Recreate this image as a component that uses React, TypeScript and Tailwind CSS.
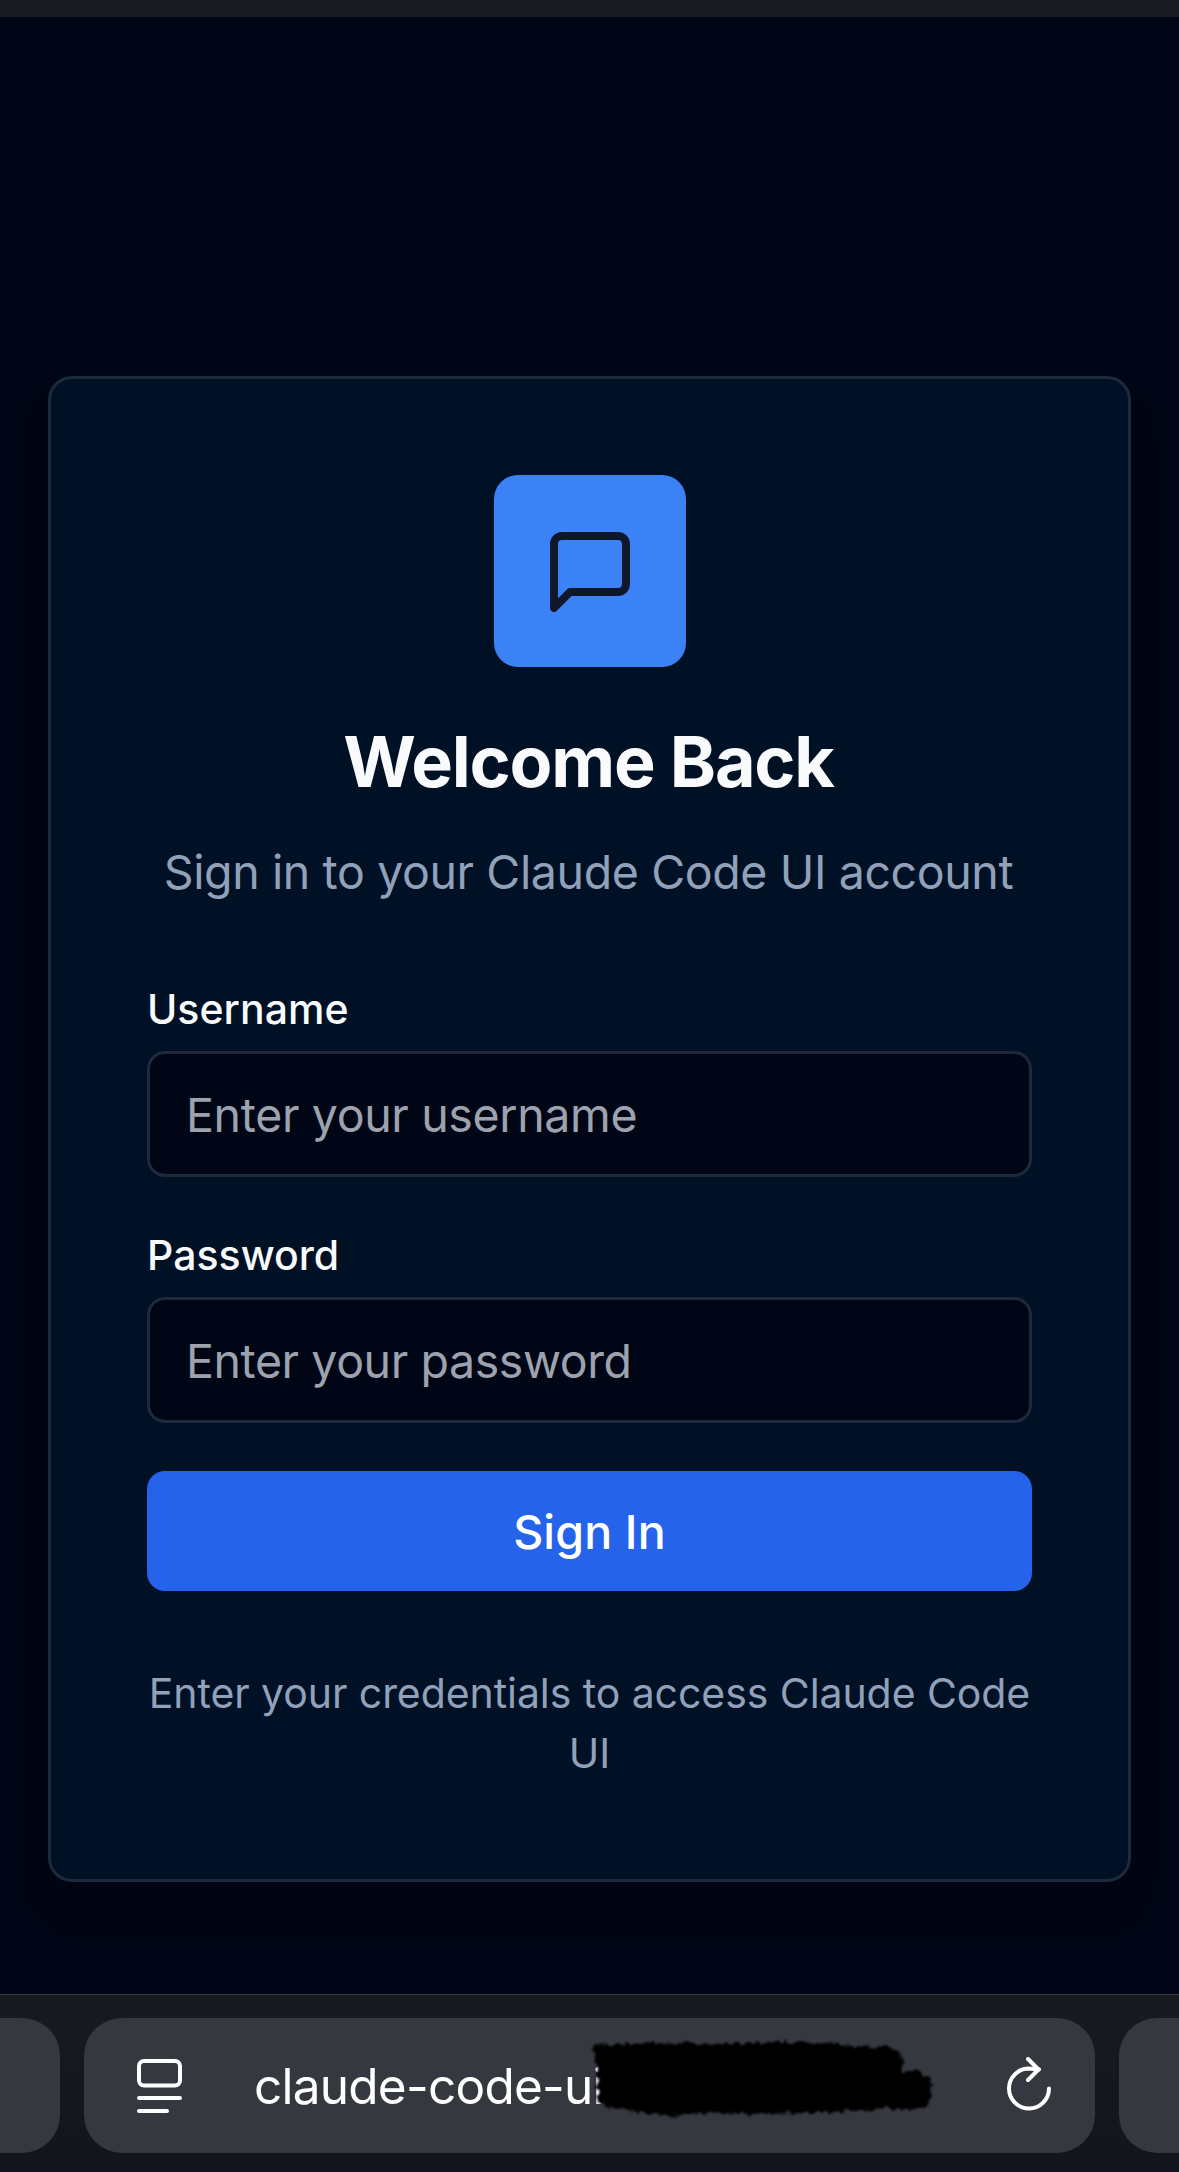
import { useState } from 'react';
import type { FormEvent } from 'react';

function MessageIcon() {
  return (
    <svg
      className="mt-0.5 ml-px size-24 text-slate-900"
      viewBox="0 0 24 24"
      fill="none"
      stroke="currentColor"
      strokeWidth="2"
      strokeLinecap="round"
      strokeLinejoin="round"
      aria-hidden="true"
    >
      <path d="M21 15a2 2 0 0 1-2 2H7l-4 4V5a2 2 0 0 1 2-2h14a2 2 0 0 1 2 2z" />
    </svg>
  );
}

type FieldProps = {
  id: string;
  label: string;
  type: string;
  placeholder: string;
  spacing: string;
};

function Field({ id, label, type, placeholder, spacing }: FieldProps) {
  const [value, setValue] = useState('');
  return (
    <div className="flex flex-col gap-3">
      <label htmlFor={id} className="text-[41px]/[60px] font-medium tracking-[0.02px] text-slate-50">
        {label}
      </label>
      <input
        id={id}
        type={type}
        value={value}
        onChange={(e) => setValue(e.target.value)}
        placeholder={placeholder}
        className={`h-[126px] w-full rounded-[18px] border-[3px] border-slate-800 bg-[#000615] px-9 pt-0.5 text-[46.5px] text-slate-50 outline-none placeholder:text-[#9ca3af] ${spacing}`}
      />
    </div>
  );
}

function LoginCard() {
  const submit = (e: FormEvent) => e.preventDefault();
  return (
    <section className="flex h-[1506px] w-[1083px] flex-col rounded-3xl border-[3px] border-slate-800 bg-[#001025] p-24 shadow-[0_30px_45px_-9px_rgba(0,0,0,0.1),0_12px_18px_-12px_rgba(0,0,0,0.1)]">
      <div className="flex flex-col items-center text-center">
        <div className="flex size-48 items-center justify-center rounded-3xl bg-[#3b82f6]">
          <MessageIcon />
        </div>
        <h1 className="mt-[47px] pr-0.5 text-[70px]/[96px] font-bold tracking-[-1.2px] text-slate-50">Welcome Back</h1>
        <p className="mt-[26px] pr-0.5 text-[46.5px]/[72px] whitespace-nowrap tracking-[-0.39px] text-slate-400">
          Sign in to your Claude Code UI account
        </p>
      </div>
      <form onSubmit={submit} className="mt-[71px] flex flex-col gap-12">
        <Field
          id="username"
          label="Username"
          type="text"
          placeholder="Enter your username"
          spacing="tracking-[-0.35px]"
        />
        <Field
          id="password"
          label="Password"
          type="password"
          placeholder="Enter your password"
          spacing="tracking-[-0.42px]"
        />
        <button
          type="submit"
          className="h-[120px] w-full rounded-[18px] bg-[#2563eb] pt-[3px] text-[46.5px] font-medium tracking-[0.15px] text-white"
        >
          Sign In
        </button>
      </form>
      <p className="mt-[72px] text-center text-[41px]/[60px] tracking-[-0.07px] text-slate-400">
        Enter your credentials to access Claude Code
        <br />
        UI
      </p>
    </section>
  );
}

function PageSettingsIcon() {
  return (
    <svg className="h-[54px] w-[45px] shrink-0" viewBox="0 0 45 54" fill="none" stroke="#fff" strokeWidth="4" strokeLinecap="round" aria-hidden="true">
      <rect x="2" y="2" width="41" height="24.5" rx="5" />
      <path d="M2 39h41M2 52h28" />
    </svg>
  );
}

function ReloadIcon() {
  return (
    <svg className="mb-1 h-[54px] w-11 shrink-0" viewBox="0 0 44 54" fill="none" stroke="#fff" strokeWidth="4" strokeLinecap="round" strokeLinejoin="round" aria-hidden="true">
      <path d="M42 31.5A20 20 0 1 1 22 11.5L32 12.5" />
      <path d="M21 2L31.5 12.5L21 23" />
    </svg>
  );
}

/* Rough brush stroke covering the rest of the host name. */
function BrushStroke() {
  return (
    <svg className="absolute top-[21px] left-[506px] h-[100px] w-[350px]" viewBox="0 0 350 100" aria-hidden="true">
      <defs>
        <filter id="rough" x="-5%" y="-15%" width="110%" height="130%">
          <feTurbulence type="fractalNoise" baseFrequency="0.16" numOctaves="2" seed="4" />
          <feDisplacementMap in="SourceGraphic" scale="9" xChannelSelector="R" yChannelSelector="G" />
          <feGaussianBlur stdDeviation="1.1" />
        </filter>
      </defs>
      <path
        filter="url(#rough)"
        d="M2 5L20 6L60 4L110 5L160 4L205 3L238 4L270 8L296 6L309 11L314 22L311 32L329 32L340 40L342 54L338 67L318 72L296 69L262 72L218 74L170 75L120 74L78 76L48 74L36 69L20 70L10 63L6 50L8 36L5 20Z"
      />
    </svg>
  );
}

function BrowserBar() {
  return (
    <nav className="flex h-[178px] flex-col border-t border-[#3a3c40] bg-linear-to-b from-[#171a1f] to-[#12151d]">
      <div className="mt-[23px] flex h-[135px] gap-6 overflow-hidden">
        <div className="w-[60px] shrink-0 rounded-r-[38px] bg-[#363840]" />
        <div className="relative flex w-[1011px] shrink-0 items-center rounded-[38px] bg-[#363840] pr-11 pl-[53px]">
          <PageSettingsIcon />
          <span className="ml-[72px] text-[49.5px]/[60px] tracking-[-0.76px] text-white">claude-code-ui</span>
          <BrushStroke />
          <span className="ml-auto flex">
            <ReloadIcon />
          </span>
        </div>
        <div className="w-[60px] shrink-0 rounded-l-[38px] bg-[#363840]" />
      </div>
    </nav>
  );
}

export default function App() {
  return (
    <div className="flex h-[2172px] w-[1179px] flex-col overflow-hidden bg-[#000615] font-['Inter',sans-serif]">
      <div className="h-[17px] shrink-0 bg-[#181b22]" />
      <main className="flex flex-1 flex-col items-center pt-[359px]">
        <LoginCard />
      </main>
      <BrowserBar />
    </div>
  );
}
